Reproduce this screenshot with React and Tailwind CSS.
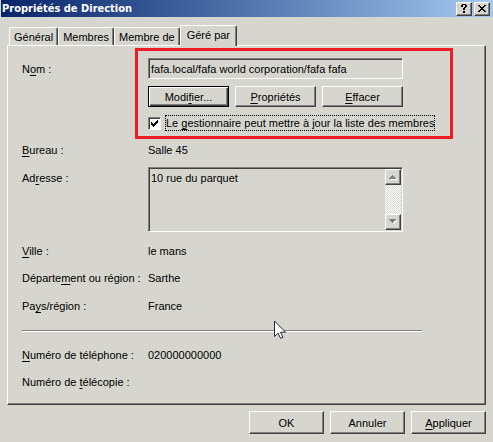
import React from "react";

const raised =
  "border border-t-white border-l-white border-r-[#404040] border-b-[#404040] shadow-[inset_-1px_-1px_0_#808080]";
const sunken =
  "border border-t-[#808080] border-l-[#808080] border-r-white border-b-white shadow-[inset_1px_1px_0_#404040]";

function U({ children }) {
  return <span className="underline decoration-1 underline-offset-2">{children}</span>;
}

function Button({ children, className = "" }) {
  return (
    <button type="button" className={`flex items-center justify-center bg-[#d6d6ce] leading-4 ${raised} ${className}`}>
      {children}
    </button>
  );
}

function TitleButton({ label, children }) {
  return (
    <button
      type="button"
      aria-label={label}
      className={`flex h-[14px] w-4 items-center justify-center bg-[#d6d6ce] ${raised}`}
    >
      {children}
    </button>
  );
}

function Tab({ children, selected }) {
  return (
    <button
      type="button"
      role="tab"
      aria-selected={Boolean(selected)}
      className={
        "whitespace-nowrap rounded-t-xs border-t border-l border-r border-t-white border-l-white border-r-[#404040] bg-[#d6d6ce] shadow-[inset_-1px_0_0_#808080] " +
        (selected ? "relative z-10 -mb-px h-[21px] px-[6px] pb-[2px]" : "h-[18px] px-1")
      }
    >
      {children}
    </button>
  );
}

function Row({ label, value, className = "" }) {
  return (
    <div className={`flex leading-4 ${className}`}>
      <dt className="w-[126px] shrink-0 whitespace-nowrap">{label}</dt>
      <dd>{value}</dd>
    </div>
  );
}

function ScrollButton({ label, up }) {
  return (
    <button
      type="button"
      disabled
      aria-label={label}
      className={`flex h-4 w-4 items-center justify-center bg-[#d6d6ce] ${raised}`}
    >
      <svg width="9" height="6" viewBox="0 0 9 6" shapeRendering="crispEdges" aria-hidden="true">
        {up ? (
          <>
            <path d="M2 5h6v1H2zM7 4h1v1H7z" fill="#fff" />
            <path d="M3 1h1v1h1v1h1v1h1v1H0V4h1V3h1V2h1z" fill="#808080" />
          </>
        ) : (
          <>
            <path d="M8 1v1H7v1H6v1H5v1H4V4h1V2h2V1z" fill="#fff" />
            <path d="M0 0h7v1H6v1H5v1H4v1H3V3H2V2H1V1H0z" fill="#808080" />
          </>
        )}
      </svg>
    </button>
  );
}

export default function App() {
  return (
    <main className="min-h-screen bg-[#d6d6ce] pb-2 font-['Liberation_Sans',Arial,sans-serif] text-[11px] leading-4 text-black">
      <header className="ml-px flex h-[17px] items-center justify-between bg-linear-to-r from-[#0a246a] to-[#a6caf0] pr-[3px] pl-px">
        <h1 className="font-['DejaVu_Sans_Condensed','Noto_Sans',sans-serif] text-[11px] leading-4 font-bold text-white">
          Propriétés de Direction
        </h1>
        <div className="flex gap-[2px]">
          <TitleButton label="Aide">
            <svg width="6" height="9" viewBox="0 0 6 9" shapeRendering="crispEdges" aria-hidden="true">
              <path d="M1 0h4v1h1v2H5v1H4v2H2V4h1V3h1V1H2v2H0V1h1zM2 7h2v2H2z" />
            </svg>
          </TitleButton>
          <TitleButton label="Fermer">
            <svg width="8" height="7" viewBox="0 0 8 7" shapeRendering="crispEdges" aria-hidden="true">
              <path d="M0 0h2v1h1v1h2V1h1V0h2v1H7v1H6v1H5v1h1v1h1v1h1v1H6V6H5V5H3v1H2v1H0V6h1V5h1V4h1V3H2V2H1V1H0z" />
            </svg>
          </TitleButton>
        </div>
      </header>

      <div className="px-[7px] pt-[8px]">
        <div role="tablist" className="flex items-end pl-[2px]">
          <Tab>Général</Tab>
          <Tab>Membres</Tab>
          <Tab>Membre de</Tab>
          <Tab selected>Géré par</Tab>
        </div>

        <section
          role="tabpanel"
          className="border border-t-white border-l-white border-r-[#404040] border-b-[#404040] pt-3 pr-[63px] pb-[14px] pl-[14px] shadow-[inset_-1px_-1px_0_#808080]"
        >
          <div className="flex">
            <label htmlFor="name" className="w-[126px] shrink-0 pt-[3px]">
              N<U>o</U>m :
            </label>
            <div className="relative min-w-0 flex-1">
              <div className="pr-[19px]">
                <input
                  id="name"
                  readOnly
                  defaultValue="fafa.local/fafa world corporation/fafa fafa"
                  className={`block h-[21px] w-full px-[2px] outline-none ${sunken}`}
                />
                <div className="mt-[7px] grid grid-cols-3 gap-[6px]">
                  <button
                    type="button"
                    className="h-[21px] border border-black bg-[#d6d6ce] leading-4 shadow-[inset_1px_1px_0_#fff,inset_-1px_-1px_0_#404040,inset_-2px_-2px_0_#808080]"
                  >
                    Modi<U>f</U>ier...
                  </button>
                  <Button className="h-[21px]">
                    <span>
                      <U>P</U>ropriétés
                    </span>
                  </Button>
                  <Button className="h-[21px]">
                    <span>
                      <U>E</U>ffacer
                    </span>
                  </Button>
                </div>
              </div>
              <div className="mt-2 flex items-center gap-1">
                <span className="grid h-[13px] w-[13px] shrink-0">
                  <input
                    id="manager"
                    type="checkbox"
                    defaultChecked
                    className={`peer col-start-1 row-start-1 h-[13px] w-[13px] appearance-none bg-white ${sunken}`}
                  />
                  <svg
                    width="7"
                    height="7"
                    viewBox="0 0 7 7"
                    shapeRendering="crispEdges"
                    aria-hidden="true"
                    className="pointer-events-none invisible col-start-1 row-start-1 place-self-center peer-checked:visible"
                  >
                    <path d="M6 0h1v3H6v1H5v1H4v1H3v1H2V6H1V5H0V2h1v1h1v1h1V3h1V2h1V1h1z" />
                  </svg>
                </span>
                <label htmlFor="manager" className="border border-dotted border-black leading-[14px] whitespace-nowrap">
                  Le <U>g</U>estionnaire peut mettre à jour la liste des membres
                </label>
              </div>
              <div className="pointer-events-none absolute -top-[10px] -right-[31px] -bottom-2 -left-[13px] border-3 border-[#ed1c24]" />
            </div>
          </div>

          <dl className="mt-[11px]">
            <Row label={<><U>B</U>ureau :</>} value="Salle 45" />
          </dl>

          <div className="mt-[9px] flex pr-[19px]">
            <label htmlFor="address" className="w-[126px] shrink-0 pt-[3px]">
              Ad<U>r</U>esse :
            </label>
            <div className={`flex h-[65px] min-w-0 flex-1 p-px ${sunken}`}>
              <textarea
                id="address"
                readOnly
                defaultValue="10 rue du parquet"
                className="block h-full min-w-0 flex-1 resize-none overflow-hidden px-px pt-px leading-4 outline-none"
              />
              <div className="flex flex-col justify-between bg-[repeating-conic-gradient(#fff_0_25%,#d6d6ce_0_50%)] bg-[length:2px_2px]">
                <ScrollButton label="Défiler vers le haut" up />
                <ScrollButton label="Défiler vers le bas" />
              </div>
            </div>
          </div>

          <dl className="mt-[11px]">
            <Row label={<><U>V</U>ille :</>} value="le mans" />
            <Row className="mt-[11px]" label={<>Départe<U>m</U>ent ou région :</>} value="Sarthe" />
            <Row className="mt-3" label={<>Pa<U>y</U>s/région :</>} value="France" />
          </dl>

          <div className="relative mt-4">
            <hr className="h-[2px] border-t border-b border-t-[#808080] border-b-white" />
            <svg
              width="13"
              height="20"
              viewBox="0 0 13 20"
              aria-hidden="true"
              className="pointer-events-none absolute -top-[10px] left-[252px]"
            >
              <path
                d="M.5 1v15.5l3.6-3.4 2.4 5.2 2.4-1-2.3-5.1h5z"
                fill="#fff"
                stroke="#25253a"
                strokeLinejoin="miter"
              />
            </svg>
          </div>

          <dl className="mt-[15px]">
            <Row label={<><U>N</U>uméro de téléphone :</>} value="020000000000" />
            <Row className="mt-[11px]" label={<>Numéro de <U>t</U>élécopie :</>} value="" />
          </dl>
        </section>

        <footer className="mt-[6px] flex justify-end gap-[6px]">
          <Button className="h-[23px] w-[75px]">OK</Button>
          <Button className="h-[23px] w-[75px]">Annuler</Button>
          <Button className="h-[23px] w-[75px]">
            <span>
              <U>A</U>ppliquer
            </span>
          </Button>
        </footer>
      </div>
    </main>
  );
}
